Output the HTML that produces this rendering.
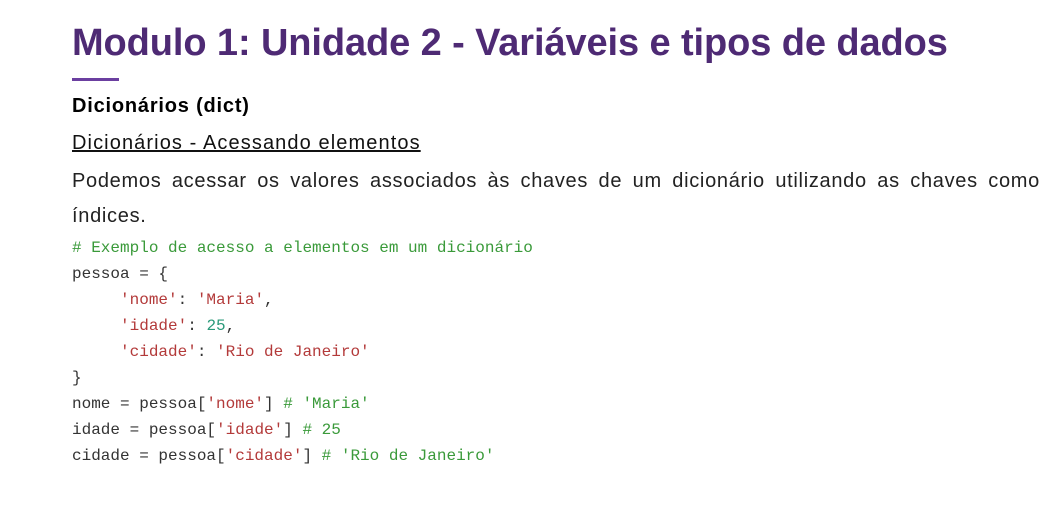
<!DOCTYPE html>
<html><head><meta charset="utf-8"><style>
body{margin:0;background:#fff;width:1059px;height:526px;overflow:hidden;font-family:"Liberation Sans",sans-serif;}
.t{position:absolute;left:72px;top:22px;font-size:38px;font-weight:bold;color:#4e2a74;white-space:nowrap;letter-spacing:-0.1px;}
.bar{position:absolute;left:72px;top:78px;width:47px;height:3px;background:#6b3fa0;}
.h{position:absolute;left:72px;top:95px;font-size:20px;font-weight:bold;color:#000;letter-spacing:0.8px;}
.u{position:absolute;left:72px;top:132px;font-size:20px;color:#111;text-decoration:underline;letter-spacing:1.1px;}
.p{position:absolute;left:72px;top:164px;width:968px;font-size:20px;line-height:35px;color:#222;text-align:justify;text-align-last:left;letter-spacing:0.7px;}
pre{position:absolute;left:72px;top:235px;margin:0;font-family:"Liberation Mono",monospace;font-size:16px;line-height:26px;color:#333;}
.c{color:#3a9a3a}.s{color:#b33a3a}.n{color:#2a9a7a}
</style></head><body>
<div class="t">Modulo 1: Unidade 2 - Variáveis e tipos de dados</div>
<div class="bar"></div>
<div class="h">Dicionários (dict)</div>
<div class="u">Dicionários - Acessando elementos</div>
<div class="p">Podemos acessar os valores associados às chaves de um dicionário utilizando as chaves como índices.</div>
<pre><span class="c"># Exemplo de acesso a elementos em um dicionário</span>
pessoa = {
     <span class="s">'nome'</span>: <span class="s">'Maria'</span>,
     <span class="s">'idade'</span>: <span class="n">25</span>,
     <span class="s">'cidade'</span>: <span class="s">'Rio de Janeiro'</span>
}
nome = pessoa[<span class="s">'nome'</span>] <span class="c"># 'Maria'</span>
idade = pessoa[<span class="s">'idade'</span>] <span class="c"># 25</span>
cidade = pessoa[<span class="s">'cidade'</span>] <span class="c"># 'Rio de Janeiro'</span></pre>
</body></html>
